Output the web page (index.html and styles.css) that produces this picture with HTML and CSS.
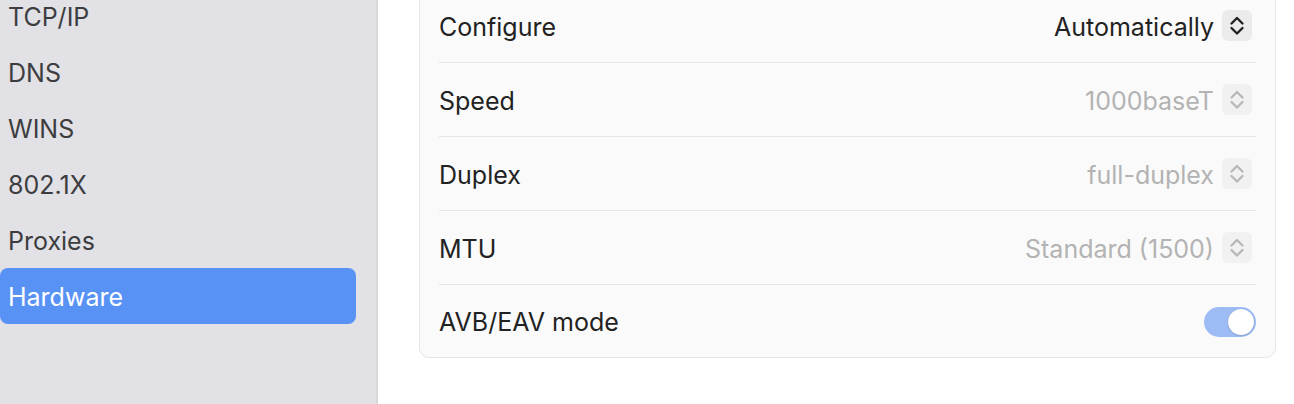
FILE: index.html
```html
<!DOCTYPE html>
<html>
<head>
<meta charset="utf-8">
<link rel="stylesheet" href="styles.css">
</head>
<body>
<div class="app">
  <nav class="sidebar">
    <ul class="nav-list">
      <li class="nav-item">TCP/IP</li>
      <li class="nav-item">DNS</li>
      <li class="nav-item">WINS</li>
      <li class="nav-item">802.1X</li>
      <li class="nav-item">Proxies</li>
      <li class="nav-item active">Hardware</li>
    </ul>
  </nav>
  <main class="main">
    <section class="card">
      <div class="row">
        <span class="label">Configure</span>
        <div class="control">
          <span class="value">Automatically</span>
          <span class="stepper">
            <svg viewBox="0 0 30 31" width="30" height="31"><path d="M9.5 13.5 L15 8 L20.5 13.5 M9.5 18 L15 23.5 L20.5 18" fill="none" stroke="currentColor" stroke-width="2.3" stroke-linecap="round" stroke-linejoin="round"/></svg>
          </span>
        </div>
      </div>
      <div class="row">
        <span class="label">Speed</span>
        <div class="control disabled">
          <span class="value">1000baseT</span>
          <span class="stepper">
            <svg viewBox="0 0 30 31" width="30" height="31"><path d="M9.5 13.5 L15 8 L20.5 13.5 M9.5 18 L15 23.5 L20.5 18" fill="none" stroke="currentColor" stroke-width="2.3" stroke-linecap="round" stroke-linejoin="round"/></svg>
          </span>
        </div>
      </div>
      <div class="row">
        <span class="label">Duplex</span>
        <div class="control disabled">
          <span class="value">full-duplex</span>
          <span class="stepper">
            <svg viewBox="0 0 30 31" width="30" height="31"><path d="M9.5 13.5 L15 8 L20.5 13.5 M9.5 18 L15 23.5 L20.5 18" fill="none" stroke="currentColor" stroke-width="2.3" stroke-linecap="round" stroke-linejoin="round"/></svg>
          </span>
        </div>
      </div>
      <div class="row">
        <span class="label">MTU</span>
        <div class="control disabled">
          <span class="value">Standard (1500)</span>
          <span class="stepper">
            <svg viewBox="0 0 30 31" width="30" height="31"><path d="M9.5 13.5 L15 8 L20.5 13.5 M9.5 18 L15 23.5 L20.5 18" fill="none" stroke="currentColor" stroke-width="2.3" stroke-linecap="round" stroke-linejoin="round"/></svg>
          </span>
        </div>
      </div>
      <div class="row last">
        <span class="label">AVB/EAV mode</span>
        <span class="toggle"><span class="knob"></span></span>
      </div>
    </section>
  </main>
</div>
</body>
</html>
```

FILE: styles.css
```css
* { box-sizing: border-box; }
html, body { margin: 0; padding: 0; }
body {
  font-family: Inter, "Noto Sans", "Liberation Sans", sans-serif;
  background: #ffffff;
  overflow: hidden;
}
.app {
  display: flex;
  width: 1294px;
  height: 404px;
  overflow: hidden;
}
.sidebar {
  width: 378px;
  flex: 0 0 378px;
  background: #e1e1e6;
  border-right: 1px solid #d3d3d8;
  box-shadow: inset -2px 0 2px -1px rgba(0,0,0,0.04);
}
.nav-list {
  list-style: none;
  margin: -12px 0 0 0;
  padding: 0;
}
.nav-item {
  height: 56px;
  width: 356px;
  display: flex;
  align-items: center;
  padding: 1px 0 0 8px;
  font-size: 25px;
  color: #3d3d40;
  border-radius: 8px;
}
.nav-item.active {
  background: #5892f5;
  color: #ffffff;
  height: 56px;
}
.main {
  flex: 1;
  padding: 0 18px 0 41px;
}
.card {
  margin-top: -12px;
  background: #fafafa;
  border: 1px solid #e6e6e6;
  border-radius: 10px;
  padding: 0 19px;
}
.row {
  height: 74px;
  display: flex;
  align-items: center;
  justify-content: space-between;
  border-bottom: 1px solid #e6e6e6;
  font-size: 25px;
  color: #222222;
  padding-top: 2px;
}
.row.last {
  height: 72px;
  border-bottom: none;
}
.control {
  display: flex;
  align-items: center;
  gap: 8px;
  margin-right: 4px;
}
.value { color: #222222; }
.stepper {
  width: 30px;
  height: 31px;
  border-radius: 6px;
  background: #ebebeb;
  color: #1f1f1f;
  display: flex;
  margin-top: -2px;
}
.control.disabled .value { color: #b3b3b3; }
.control.disabled .stepper {
  background: #f1f1f1;
  color: #b8b8b8;
}
.toggle {
  width: 52px;
  height: 30px;
  border-radius: 15px;
  background: #9dbcf6;
  display: flex;
  justify-content: flex-end;
  align-items: center;
  padding: 2px;
}
.knob {
  width: 26px;
  height: 26px;
  border-radius: 50%;
  background: #ffffff;
  box-shadow: 0 0 1px rgba(0,0,0,0.25), 0 1px 2px rgba(0,0,0,0.12);
}
```
